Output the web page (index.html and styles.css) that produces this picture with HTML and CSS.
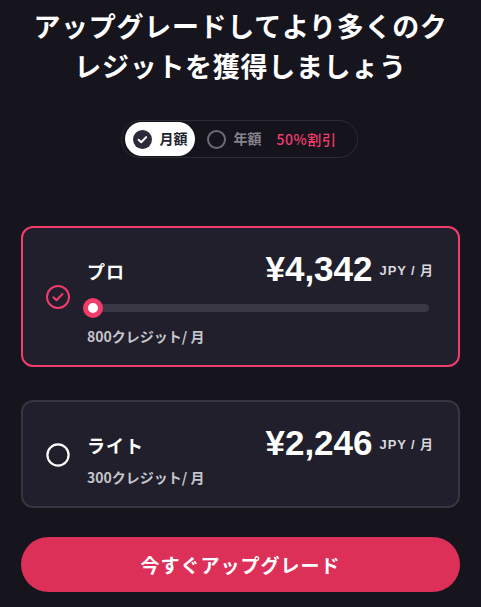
FILE: index.html
```html
<!DOCTYPE html>
<html lang="ja">
<head>
<meta charset="utf-8">
<link rel="stylesheet" href="styles.css">
</head>
<body>
<div class="page">
  <h1 class="title">アップグレードしてより多くのクレジットを獲得しましょう</h1>
  <div class="toggle-wrap">
    <div class="toggle">
      <div class="opt active">
        <span class="dot dot-on"><svg width="19" height="19" viewBox="0 0 19 19"><circle cx="9.5" cy="9.5" r="9.5" fill="#2b2a3a"/><path d="M5.6 9.8l2.6 2.5 5-5.2" fill="none" stroke="#fff" stroke-width="2" stroke-linecap="round" stroke-linejoin="round"/></svg></span>
        <span class="opt-label">月額</span>
      </div>
      <div class="opt">
        <span class="dot dot-off"></span>
        <span class="opt-label muted">年額</span>
        <span class="discount">50%割引</span>
      </div>
    </div>
  </div>
  <div class="plans">
    <div class="plan selected">
      <span class="plan-icon"><svg width="24" height="24" viewBox="0 0 24 24"><circle cx="12" cy="12" r="11" fill="none" stroke="#f23c6c" stroke-width="2"/><path d="M7.4 12.3l3.1 2.9 6-6.2" fill="none" stroke="#f23c6c" stroke-width="2" stroke-linecap="round" stroke-linejoin="round"/></svg></span>
      <div class="plan-body">
        <div class="plan-head">
          <span class="plan-name">プロ</span>
          <span class="price-group"><span class="price">¥4,342</span><span class="unit">JPY / 月</span></span>
        </div>
        <div class="slider"><span class="thumb"></span></div>
        <div class="credits">800クレジット/ 月</div>
      </div>
    </div>
    <div class="plan">
      <span class="plan-icon"><svg width="24" height="24" viewBox="0 0 24 24"><circle cx="12" cy="12" r="10.6" fill="none" stroke="#ffffff" stroke-width="2.2"/></svg></span>
      <div class="plan-body">
        <div class="plan-head">
          <span class="plan-name">ライト</span>
          <span class="price-group"><span class="price">¥2,246</span><span class="unit">JPY / 月</span></span>
        </div>
        <div class="credits credits-lite">300クレジット/ 月</div>
      </div>
    </div>
  </div>
  <button class="cta">今すぐアップグレード</button>
</div>
</body>
</html>
```

FILE: styles.css
```css
* { box-sizing: border-box; }
html, body {
  margin: 0;
  padding: 0;
  background: #16151e;
}
body {
  font-family: "Liberation Sans", "Noto Sans CJK JP", sans-serif;
  color: #ffffff;
}
.page {
  padding: 8px 21px 0;
}
.title {
  margin: 0;
  font-size: 27px;
  line-height: 40px;
  font-weight: 700;
  letter-spacing: 0.7px;
  text-align: center;
  color: #ffffff;
}
.toggle-wrap {
  display: flex;
  justify-content: center;
  margin-top: 32px;
}
.toggle {
  display: flex;
  align-items: center;
  height: 38px;
  padding: 0 20px 0 3px;
  border: 1.5px solid #2c2b35;
  border-radius: 19px;
  background: #15141c;
  margin-left: -2px;
}
.opt {
  display: flex;
  align-items: center;
  font-size: 14px;
  font-weight: 700;
}
.opt.active {
  background: #ffffff;
  height: 34px;
  border-radius: 17px;
  padding: 0 8px 0 8px;
  color: #22212c;
}
.opt:not(.active) {
  margin-left: 12px;
}
.dot {
  width: 19px;
  height: 19px;
  display: flex;
}
.dot-off {
  border: 2px solid #6c6b73;
  border-radius: 50%;
}
.opt-label {
  margin-left: 7px;
  line-height: 20px;
}
.muted { color: #85848b; }
.discount {
  margin-left: 15px;
  font-family: "Noto Sans CJK JP", sans-serif;
  color: #f23c6c;
  font-weight: 500;
  letter-spacing: 0.6px;
  line-height: 20px;
}
.plans {
  margin-top: 68px;
  display: flex;
  flex-direction: column;
  gap: 33px;
}
.plan {
  display: flex;
  align-items: center;
  background: #201f2b;
  border: 2px solid #363541;
  border-radius: 12px;
  padding: 21px 24px 20px 23px;
}
.plan.selected {
  border-color: #f23c6c;
}
.plan-icon {
  width: 24px;
  height: 24px;
  display: flex;
  flex: none;
}
.plan-body {
  flex: 1;
  margin-left: 17px;
}
.plan-head {
  display: flex;
  justify-content: space-between;
  align-items: flex-start;
}
.plan-name {
  margin-top: 12px;
  font-size: 18px;
  line-height: 24px;
  font-weight: 700;
  letter-spacing: 1px;
}
.price-group {
  display: flex;
  align-items: flex-start;
}
.price {
  font-size: 35px;
  line-height: 40px;
  font-weight: 700;
}
.unit {
  margin-top: 14px;
  margin-left: 7px;
  font-size: 13px;
  line-height: 16px;
  font-weight: 700;
  letter-spacing: 0.9px;
  color: #d8d7dc;
}
.slider {
  position: relative;
  margin: 9px 5px 0 -4px;
  height: 20px;
  display: flex;
  align-items: center;
}
.slider::before {
  content: "";
  flex: 1;
  height: 8px;
  border-radius: 4px;
  background: #393844;
}
.thumb {
  position: absolute;
  left: 0;
  top: 0;
  width: 20px;
  height: 20px;
  border-radius: 50%;
  background: #ffffff;
  border: 5px solid #f23c6c;
}
.credits {
  margin-top: 9px;
  font-family: "Noto Sans CJK JP", sans-serif;
  font-size: 14px;
  line-height: 18px;
  font-weight: 700;
  color: #c6c5cc;
}
.credits-lite {
  margin-top: 5px;
}
.cta {
  display: block;
  width: 100%;
  margin-top: 29px;
  height: 55px;
  border: none;
  border-radius: 28px;
  background: #dc3059;
  color: #ffffff;
  font-family: "Liberation Sans", "Noto Sans CJK JP", sans-serif;
  font-size: 19px;
  font-weight: 700;
  letter-spacing: 1px;
}
```
